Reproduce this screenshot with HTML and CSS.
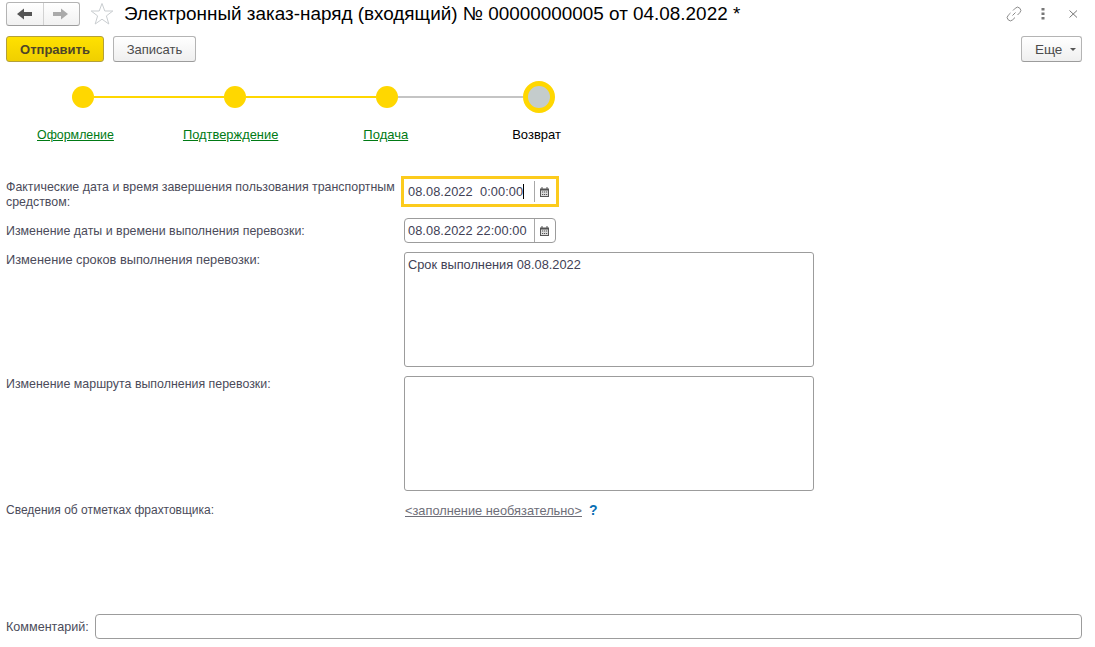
FILE: index.html
```html
<!DOCTYPE html>
<html lang="ru">
<head>
<meta charset="utf-8">
<title>Электронный заказ-наряд</title>
<link rel="stylesheet" href="styles.css">
</head>
<body>
<div class="page">
  <header class="titlebar">
    <div class="nav">
      <button class="nav-btn"><svg width="16" height="12" viewBox="0 0 16 12"><path d="M0 6 7 0.5V4H15V8H7V11.5Z" fill="#555"/></svg></button>
      <button class="nav-btn"><svg width="16" height="12" viewBox="0 0 16 12"><path d="M15 6 8 0.5V4H0V8H8V11.5Z" fill="#aaa"/></svg></button>
    </div>
    <svg class="star" width="24" height="24" viewBox="0 0 24 24"><path d="M12 1.5 14.8 9H22.8L16.4 13.9 18.8 22 12 17.2 5.2 22 7.6 13.9 1.2 9H9.2Z" fill="#fff" stroke="#c9cdd0"/></svg>
    <h1 class="title">Электронный заказ-наряд (входящий) № 00000000005 от 04.08.2022 *</h1>
    <div class="win-icons">
      <svg class="icon-link" width="16" height="16" viewBox="0 0 16 16" fill="none" stroke="#888" stroke-width="1"><path d="M6.5 9.5 9.5 6.5M7 4.5 9.3 2.2a2.6 2.6 0 0 1 4.5 4.5L11.5 9M9 11.5 6.7 13.8A2.6 2.6 0 0 1 2.2 9.3L4.5 7"/></svg>
      <svg class="icon-dots" width="4" height="12" viewBox="0 0 4 12" fill="#777"><rect x="0.5" y="0" width="3" height="2.5"/><rect x="0.5" y="4.5" width="3" height="2.5"/><rect x="0.5" y="9" width="3" height="2.5"/></svg>
      <svg class="icon-close" width="9" height="8" viewBox="0 0 9 8" stroke="#777" stroke-width="1"><path d="M0.5 0.5 8 7.5M8 0.5 0.5 7.5"/></svg>
    </div>
  </header>

  <div class="toolbar">
    <button class="btn btn-primary">Отправить</button>
    <button class="btn btn-save">Записать</button>
    <button class="btn btn-more">Еще <span class="caret"></span></button>
  </div>

  <div class="stepper">
    <span class="dot"></span><span class="line line-done"></span>
    <span class="dot"></span><span class="line line-done"></span>
    <span class="dot"></span><span class="line line-todo"></span>
    <span class="dot dot-current"></span>
  </div>
  <div class="step-labels">
    <a class="step-link step-a" href="#">Оформление</a>
    <a class="step-link step-b" href="#">Подтверждение</a>
    <a class="step-link step-c" href="#">Подача</a>
    <span class="step-now">Возврат</span>
  </div>

  <form class="form">
    <label class="lbl lbl-a">Фактические дата и время завершения пользования транспортным средством:</label>
    <div class="field field-focus">
      <span class="value">08.08.2022&nbsp; 0:00:00</span><span class="cursor"></span>
      <span class="cal-wrap"><svg class="cal" width="9" height="10" viewBox="0 0 9 10"><path d="M0 1.5H9V10H0Z" fill="#555"/><path d="M2 0V2M7 0V2" stroke="#555"/><path d="M1 3.5H8V9H1Z" fill="#ddd"/><path d="M2 5H3.2M4 5H5.2M6 5H7.2M2 7.5H3.2M4 7.5H5.2M6 7.5H7.2" stroke="#555"/></svg></span>
    </div>

    <label class="lbl lbl-b">Изменение даты и времени выполнения перевозки:</label>
    <div class="field field-date">
      <span class="value">08.08.2022 22:00:00</span>
      <span class="cal-wrap"><svg class="cal" width="9" height="10" viewBox="0 0 9 10"><path d="M0 1.5H9V10H0Z" fill="#555"/><path d="M2 0V2M7 0V2" stroke="#555"/><path d="M1 3.5H8V9H1Z" fill="#ddd"/><path d="M2 5H3.2M4 5H5.2M6 5H7.2M2 7.5H3.2M4 7.5H5.2M6 7.5H7.2" stroke="#555"/></svg></span>
    </div>

    <label class="lbl lbl-c lbl-wide">Изменение сроков выполнения перевозки:</label>
    <div class="area">Срок выполнения 08.08.2022</div>

    <label class="lbl lbl-c">Изменение маршрута выполнения перевозки:</label>
    <div class="area"></div>

    <label class="lbl lbl-d">Сведения об отметках фрахтовщика:</label>
    <div class="optional"><a class="opt-link" href="#">&lt;заполнение необязательно&gt;</a><span class="help">?</span></div>
  </form>

  <div class="comment">
    <label class="comment-lbl">Комментарий:</label>
    <div class="comment-input"></div>
  </div>
</div>
</body>
</html>
```
FILE: styles.css
```css
* { box-sizing: border-box; }
html, body { margin: 0; padding: 0; background: #fff; }
body { font-family: "Liberation Sans", Arial, sans-serif; font-size: 12.4px; color: #4b4b5a; }
.page { width: 1095px; height: 647px; overflow: hidden; padding: 2px 13px 0 6px; }

.titlebar { display: flex; align-items: center; height: 24px; }
.nav { display: flex; width: 74px; height: 24px; border: 1px solid #b4b4b4; border-bottom-color: #9c9c9c; border-radius: 3px; background: linear-gradient(#fff, #f1f1f1); }
.nav-btn { flex: 1; padding: 0; border: 0; background: none; display: flex; align-items: center; justify-content: center; }
.nav-btn + .nav-btn { border-left: 1px solid #d2d2d2; }
.star { margin: 0 0 0 10px; flex: none; }
.title { margin: 0 0 0 10px; font-size: 18.9px; font-weight: 400; color: #000; white-space: nowrap; flex: 1; line-height: 24px; }
.win-icons { display: flex; align-items: center; margin-right: 4px; }
.icon-dots { margin-left: 19px; }
.icon-close { margin-left: 24px; }

.toolbar { display: flex; gap: 9px; margin-top: 10px; height: 26px; }
.btn { height: 26px; font: inherit; font-size: 13px; color: #4b4b4b; border: 1px solid #b4b4b4; border-bottom-color: #9c9c9c; border-radius: 3px; background: linear-gradient(#fff, #efefef); padding: 0; }
.btn-primary { width: 98px; font-weight: 700; color: #4e4528; border-color: #b3a03a; background: linear-gradient(#ffe100, #f0cf00); }
.btn-save { width: 83px; }
.btn-more { width: 61px; margin-left: auto; font-size: 13.5px; padding-left: 8px; }
.caret { display: inline-block; margin-left: 4px; vertical-align: middle; border: 3px solid transparent; border-top: 3px solid #555; border-bottom: 0; }

.stepper { display: flex; align-items: center; height: 32px; margin: 19px 0 0 66px; }
.dot { width: 22px; height: 22px; border-radius: 50%; background: #ffd700; flex: none; }
.dot-current { width: 32px; height: 32px; border: 5px solid #ffd700; background: #c4cccc; }
.line { height: 2px; width: 130px; flex: none; }
.line-done { background: #ffd700; }
.line-todo { background: #c4c4c4; width: 125px; }

.step-labels { display: flex; margin-top: 15px; height: 14px; line-height: 14px; }
.step-link { color: #007a14; text-decoration: underline; white-space: nowrap; }
.step-a { margin-left: 31px; }
.step-b { margin-left: 69px; font-size: 12.9px; }
.step-c { margin-left: 85px; font-size: 13px; }
.step-now { margin-left: 104px; color: #000; font-size: 13px; }

.form { display: grid; grid-template-columns: 398px 1fr; margin-top: 34px; justify-items: start; }
.lbl { line-height: 15px; width: 394px; }
.lbl-a { height: 31px; padding-top: 4px; }
.lbl-b { padding-top: 5px; margin-top: 12px; }
.lbl-c { margin-top: 10px; }
.lbl-wide { font-size: 12.8px; margin-top: 9px; }
.lbl-d { margin-top: 12px; font-size: 12px; }

.field { display: flex; align-items: center; height: 25px; color: #414155; border: 1px solid #9c9c9c; border-radius: 4px; font-size: 12.8px; }
.field-focus { width: 158px; height: 31px; margin-left: -3px; border: 3px solid #fccb1c; border-radius: 0; padding-left: 4px; }
.field-date { width: 152px; margin-top: 11px; padding-left: 3px; }
.value { white-space: pre; letter-spacing: 0.07px; }
.cursor { width: 1px; height: 15px; background: #000; margin-left: 0; }
.cal-wrap { margin-left: auto; width: 21px; height: 100%; display: flex; align-items: center; padding-left: 5px; border-left: 1px solid #a8a8a8; flex: none; }
.field-focus .cal-wrap { height: 21px; width: 22px; }

.area { width: 410px; height: 115px; margin-top: 9px; border: 1px solid #9c9c9c; border-radius: 3px; padding: 4px 3px; line-height: 15px; font-size: 12.8px; color: #414155; }
.optional { margin: 11px 0 0 1px; display: flex; align-items: center; gap: 7px; line-height: 15px; font-size: 12.8px; }
.opt-link { color: #6e6e78; text-decoration: underline; }
.help { color: #0a6fb4; font-weight: 700; font-size: 14px; }

.comment { display: flex; align-items: center; margin-top: 96px; }
.comment-lbl { width: 89px; flex: none; font-size: 12.6px; }
.comment-input { flex: 1; height: 25px; border: 1px solid #9c9c9c; border-radius: 4px; }
```
